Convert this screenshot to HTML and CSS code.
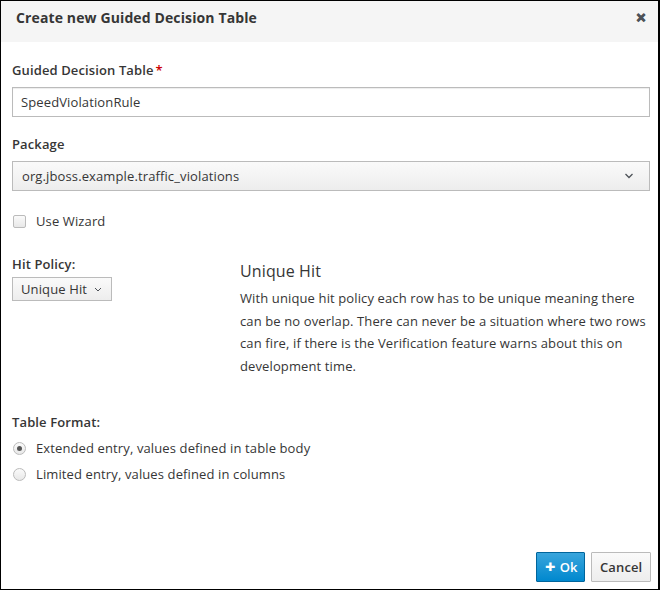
FILE: index.html
```html
<!DOCTYPE html>
<html>
<head>
<meta charset="utf-8">
<link rel="stylesheet" href="styles.css">
</head>
<body>
<div class="modal">
  <div class="modal-header">
    <h4 class="modal-title">Create new Guided Decision Table</h4>
    <span class="close">&#x2715;</span>
  </div>
  <div class="modal-body">
    <label class="field-label">Guided Decision Table<span class="req">*</span></label>
    <div class="input">SpeedViolationRule</div>

    <label class="field-label gap">Package</label>
    <div class="select">
      <span>org.jboss.example.traffic_violations</span>
      <svg class="chev" width="10" height="6" viewBox="0 0 10 6"><path d="M1.5 1 L5 4.5 L8.5 1" fill="none" stroke="#4d5258" stroke-width="1.3"/></svg>
    </div>

    <div class="check-row">
      <span class="checkbox"></span>
      <span>Use Wizard</span>
    </div>

    <div class="policy">
      <div class="policy-left">
        <label class="field-label">Hit Policy:</label>
        <div class="dropdown"><span>Unique Hit</span>
          <svg class="chev-sm" width="8" height="5" viewBox="0 0 8 5"><path d="M1 1 L4 4 L7 1" fill="none" stroke="#4d5258" stroke-width="1"/></svg>
        </div>
      </div>
      <div class="policy-right">
        <h3 class="policy-title">Unique Hit</h3>
        <p class="policy-desc">With unique hit policy each row has to be unique meaning there can be no overlap. There can never be a situation where two rows can fire, if there is the Verification feature warns about this on development time.</p>
      </div>
    </div>

    <label class="field-label format">Table Format:</label>
    <div class="radio-row"><span class="radio checked"></span><span>Extended entry, values defined in table body</span></div>
    <div class="radio-row"><span class="radio"></span><span>Limited entry, values defined in columns</span></div>
  </div>
  <div class="modal-footer">
    <button class="btn btn-primary"><span class="plus">+</span>Ok</button>
    <button class="btn btn-default">Cancel</button>
  </div>
</div>
</body>
</html>
```

FILE: styles.css
```css
html, body {
  margin: 0;
  padding: 0;
  background: #fff;
}
body {
  font-family: "Open Sans", "Liberation Sans", sans-serif;
  font-size: 13px;
  letter-spacing: 0.12px;
  color: #363636;
}
.modal {
  width: 660px;
  height: 590px;
  box-sizing: border-box;
  border: 1px solid #000;
  border-right-width: 2px;
  display: flex;
  flex-direction: column;
}
.modal-header {
  background: #f5f5f5;
  height: 41px;
  box-sizing: border-box;
  padding: 7px 12px 0 15px;
  display: flex;
  align-items: flex-start;
  justify-content: space-between;
}
.modal-title {
  margin: 0;
  font-size: 14px;
  line-height: 20px;
  font-weight: 700;
  color: #363636;
}
.close {
  font-size: 12px;
  line-height: 20px;
  font-weight: 900;
  color: #4d5258;
  -webkit-text-stroke: 1px #4d5258;
}
.modal-body {
  flex: 1;
  padding: 19px 8px 0 11px;
}
.field-label {
  display: block;
  font-weight: 600;
  line-height: 18px;
  margin-bottom: 8px;
}
.field-label.gap {
  margin-top: 18px;
}
.req {
  color: #c00;
  margin-left: 2px;
}
.input {
  height: 30px;
  box-sizing: border-box;
  border: 1px solid #bbb;
  padding: 0 8px;
  display: flex;
  align-items: center;
  box-shadow: inset 0 1px 1px rgba(3,3,3,0.075);
}
.select {
  height: 30px;
  box-sizing: border-box;
  border: 1px solid #bbb;
  background: linear-gradient(#fafafa, #ededed);
  padding: 0 15px 0 9px;
  display: flex;
  align-items: center;
  justify-content: space-between;
}
.check-row {
  margin-top: 21px;
  height: 18px;
  display: flex;
  align-items: center;
  gap: 10px;
  padding-left: 1px;
}
.checkbox {
  width: 11px;
  height: 11px;
  border: 1px solid #bbb;
  border-radius: 2px;
  background: linear-gradient(#fafafa, #e8e8e8);
}
.policy {
  display: grid;
  grid-template-columns: 228px 1fr;
  margin-top: 25px;
}
.policy-left .field-label {
  margin-bottom: 4px;
}
.dropdown {
  display: inline-flex;
  align-items: center;
  gap: 7px;
  height: 24px;
  box-sizing: border-box;
  border: 1px solid #bbb;
  background: linear-gradient(#fafafa, #ededed);
  padding: 0 9px 0 8px;
  white-space: nowrap;
}
.policy-right {
  padding-top: 5px;
}
.policy-title {
  margin: 0;
  font-size: 16px;
  font-weight: 400;
  line-height: 22px;
}
.policy-desc {
  margin: 5px 0 0;
  line-height: 22.5px;
}
.format {
  margin-top: 36px;
  margin-bottom: 4px;
}
.radio-row {
  height: 26px;
  display: flex;
  align-items: center;
  gap: 10px;
  padding-left: 1px;
}
.radio {
  width: 11px;
  height: 11px;
  border: 1px solid #bbb;
  border-radius: 50%;
  background: linear-gradient(#fafafa, #e8e8e8);
  position: relative;
}
.radio.checked::after {
  content: "";
  position: absolute;
  left: 3px;
  top: 3px;
  width: 5px;
  height: 5px;
  border-radius: 50%;
  background: #555;
}
.modal-footer {
  display: flex;
  justify-content: flex-end;
  gap: 6px;
  padding: 0 7px 7px 0;
}
.btn {
  font-family: inherit;
  font-size: 13px;
  height: 30px;
  box-sizing: border-box;
  border-radius: 1px;
  padding: 0 8px;
  cursor: pointer;
  letter-spacing: 0.12px;
}
.btn-primary {
  background: linear-gradient(#39a5dc, #0088ce);
  border: 1px solid #00659c;
  color: #fff;
  width: 49px;
  font-weight: 600;
  display: flex;
  align-items: center;
  gap: 4px;
}
.plus {
  font-size: 18px;
  font-weight: 800;
  line-height: 1;
  margin-top: -2px;
}
.btn-default {
  background: linear-gradient(#fafafa, #ededed);
  border: 1px solid #bbb;
  color: #363636;
  width: 60px;
  font-weight: 600;
}
```
